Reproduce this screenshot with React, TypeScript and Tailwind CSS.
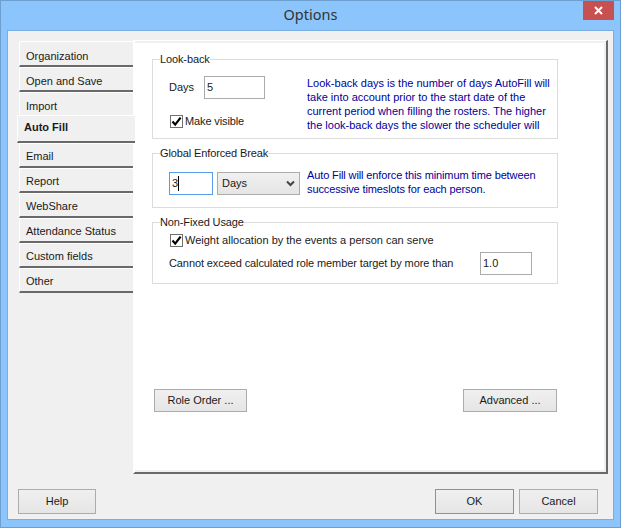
import type { ReactNode } from 'react';

const tabs = [
  { label: 'Organization', h: 'h-[26px]', pt: 'pt-[6px]' },
  { label: 'Open and Save', h: 'h-[25px]', pt: 'pt-[4px]' },
  { label: 'Import', h: 'h-[23px]', pt: 'pt-[4px]', noLine: true },
  { label: 'Auto Fill', h: 'h-[28px]', pt: 'pt-0', active: true },
  { label: 'Email', h: 'h-[25px]', pt: 'pt-[2px]' },
  { label: 'Report', h: 'h-[25px]', pt: 'pt-[2px]' },
  { label: 'WebShare', h: 'h-[25px]', pt: 'pt-[2px]' },
  { label: 'Attendance Status', h: 'h-[25px]', pt: 'pt-[2px]' },
  { label: 'Custom fields', h: 'h-[25px]', pt: 'pt-[2px]' },
  { label: 'Other', h: 'h-[25px]', pt: 'pt-[2px]' },
];

function Tab({ label, h, pt, active, noLine }: { label: string; h: string; pt: string; active?: boolean; noLine?: boolean }) {
  if (active) {
    return (
      <div className={`${h} -ml-[2px] mr-[-2px] flex items-center pl-[6px] pb-[2px] font-bold bg-[#f0f0f0] border-t border-l border-white border-b-2 border-b-[#696969] relative`}>
        {label}
      </div>
    );
  }
  return (
    <div className={`${h} ${pt} flex items-center pl-[6px] rounded-tl-[2px] border-t border-l border-white ${noLine ? '' : 'border-b-2 border-b-[#696969]'}`}>
      {label}
    </div>
  );
}

function Check({ children }: { children: ReactNode }) {
  return (
    <div className="flex items-center h-[13px]">
      <div className="w-[13px] h-[13px] ml-[1px] mr-[2px] border border-[#707070] bg-white flex items-center justify-center">
        <svg width="11" height="11" viewBox="0 0 11 11" fill="none">
          <path d="M1.5 5.5 L4.2 8.6 L9.6 1.6" stroke="#000" strokeWidth="2.2" />
        </svg>
      </div>
      <span>{children}</span>
    </div>
  );
}

function Field({ value, className = '', caret }: { value: string; className?: string; caret?: boolean }) {
  return (
    <div className={`h-[23px] border bg-white flex items-center pl-[2px] ${className}`}>
      {value}
      {caret && <span className="w-[1px] h-[15px] bg-black" />}
    </div>
  );
}

function Btn({ label, className = '' }: { label: string; className?: string }) {
  return (
    <button className={`border bg-gradient-to-b from-[#f0f0f0] to-[#e5e5e5] flex items-center justify-center ${className}`}>
      {label}
    </button>
  );
}

function Group({ title, className, children }: { title: string; className: string; children: ReactNode }) {
  return (
    <fieldset className={`border border-[#dcdcdc] ${className}`}>
      <legend className="ml-[7px] h-[14px] leading-[14px] tracking-[-0.12px]">{title}</legend>
      {children}
    </fieldset>
  );
}

export default function App() {
  return (
    <div className="w-[621px] h-[528px] bg-[#8bc5fb] border border-[#6d9fd1] flex flex-col text-[11px] text-[#1a1a1a] font-['Liberation_Sans',sans-serif] overflow-hidden">
      {/* Title bar */}
      <div className="h-[29px] shrink-0 relative flex items-center justify-center">
        <span className="text-[14.5px] text-[#333] font-['Noto_Sans',sans-serif] pb-[1px]">Options</span>
        <div className="absolute right-[6px] top-0 w-[31px] h-[19px] bg-[#c75050] flex items-center justify-center">
          <svg width="9" height="9" viewBox="0 0 9 9" fill="none">
            <path d="M1 1 L8 8 M8 1 L1 8" stroke="#fff" strokeWidth="2" />
          </svg>
        </div>
      </div>

      {/* Client area */}
      <div className="mx-[6px] mb-[7px] flex-1 border border-[#7aaee0] bg-[#f0f0f0] pt-[9px] flex flex-col">
        <div className="flex h-[434px] shrink-0 pl-[11px]">
          <div className="w-[114px] shrink-0 pt-[1px]">
            {tabs.map(t => (
              <Tab key={t.label} {...t} />
            ))}
          </div>

          <div className="w-[475px] border-t border-l-2 border-white border-r-2 border-r-[#696969] border-b-2 border-b-[#696969] bg-white">
            <div className="h-full border-t-2 border-r-2 border-b-2 border-[#f0f0f0] pl-[17px] pt-[9px]">
              <div className="w-[406px]">
                <Group title="Look-back" className="h-[87px]">
                  <div className="flex pt-[10px] pl-[16px]">
                    <div className="w-[138px] shrink-0">
                      <div className="flex items-center">
                        <span className="w-[35px]">Days</span>
                        <Field value="5" className="w-[61px] border-[#ababab]" />
                      </div>
                      <div className="mt-[16px] tracking-[-0.12px]">
                        <Check>Make visible</Check>
                      </div>
                    </div>
                    <div className="h-[56px] overflow-hidden leading-[14px] text-[#00009c] whitespace-nowrap">
                      Look-back days is the number of days AutoFill will
                      <br />
                      take into account prior to the start date of the
                      <br />
                      current period when filling the rosters. The higher
                      <br />
                      the look-back days the slower the scheduler will
                    </div>
                  </div>
                </Group>

                <Group title="Global Enforced Break" className="h-[62px] mt-[7px]">
                  <div className="flex pt-[8px] pl-[16px]">
                    <Field value="3" caret className="w-[44px] mt-[4px] border-[#569de5]" />
                    <div className="w-[83px] h-[23px] mt-[4px] ml-[4px] border border-[#acacac] bg-gradient-to-b from-[#f0f0f0] to-[#e5e5e5] flex items-center justify-between pl-[4px] pr-[4px]">
                      Days
                      <svg width="9" height="7" viewBox="0 0 9 7" fill="none">
                        <path d="M1 1.5 L4.5 5 L8 1.5" stroke="#444" strokeWidth="2" />
                      </svg>
                    </div>
                    <div className="ml-[7px] leading-[14px] text-[#00009c] whitespace-nowrap tracking-[-0.12px]">
                      Auto Fill will enforce this minimum time between
                      <br />
                      successive timeslots for each person.
                    </div>
                  </div>
                </Group>

                <Group title="Non-Fixed Usage" className="h-[69px] mt-[7px]">
                  <div className="pt-[5px] pl-[16px]">
                    <Check>Weight allocation by the events a person can serve</Check>
                    <div className="flex items-center mt-[5px]">
                      <span className="w-[311px] shrink-0 tracking-[-0.1px]">Cannot exceed calculated role member target by more than</span>
                      <Field value="1.0" className="w-[52px] border-[#ababab]" />
                    </div>
                  </div>
                </Group>

                <div className="flex justify-between mt-[105px] pl-[2px] pr-[1px]">
                  <Btn label="Role Order ..." className="w-[93px] h-[23px] border-[#acacac]" />
                  <Btn label="Advanced ..." className="w-[94px] h-[23px] border-[#acacac]" />
                </div>
              </div>
            </div>
          </div>
        </div>

        {/* Footer */}
        <div className="flex mt-[15px] pl-[10px] pr-[15px]">
          <Btn label="Help" className="w-[78px] h-[25px] border-[#acacac]" />
          <Btn label="OK" className="w-[79px] h-[25px] ml-auto border-[#569de5]" />
          <Btn label="Cancel" className="w-[79px] h-[25px] ml-[5px] border-[#acacac]" />
        </div>
      </div>
    </div>
  );
}
